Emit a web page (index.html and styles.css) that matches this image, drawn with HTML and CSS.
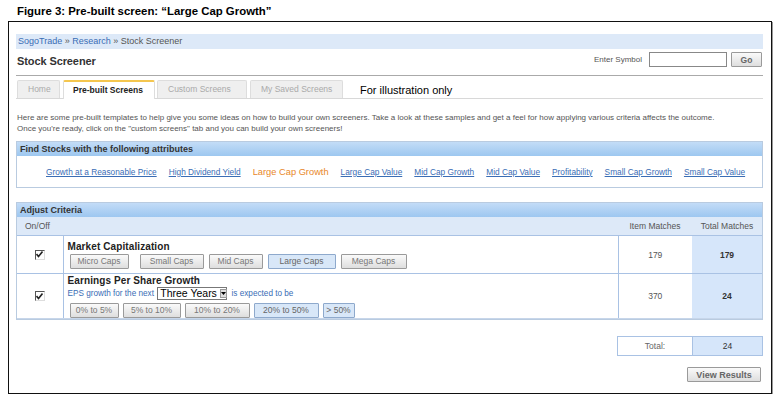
FILE: index.html
```html
<!DOCTYPE html>
<html lang="en">
<head>
    <meta charset="UTF-8">
    <title>Stock Screener</title>
    <link rel="stylesheet" href="styles.css">
</head>
<body>
    <div class="caption">Figure 3: Pre-built screen: “Large Cap Growth”</div>
    <div class="frame">
        <div class="crumbs"><a>SogoTrade</a> » <a>Research</a> » Stock Screener</div>
        <div class="header">
            <h1>Stock Screener</h1>
            <div class="symbol">
                <label>Enter Symbol</label>
                <input type="text">
                <button class="btn go">Go</button>
            </div>
        </div>
        <div class="tabs">
            <div class="tab">Home</div>
            <div class="tab active">Pre-built Screens</div>
            <div class="tab">Custom Screens</div>
            <div class="tab">My Saved Screens</div>
            <div class="note">For illustration only</div>
        </div>
        <p class="intro">Here are some pre-built templates to help give you some ideas on how to build your own screeners. Take a look at these samples and get a feel for how applying various criteria affects the outcome.<br>Once you're ready, click on the "custom screens" tab and you can build your own screeners!</p>

        <div class="box">
            <div class="box-title">Find Stocks with the following attributes</div>
            <div class="links">
                <a>Growth at a Reasonable Price</a>
                <a>High Dividend Yield</a>
                <a class="current">Large Cap Growth</a>
                <a>Large Cap Value</a>
                <a>Mid Cap Growth</a>
                <a>Mid Cap Value</a>
                <a>Profitability</a>
                <a>Small Cap Growth</a>
                <a>Small Cap Value</a>
            </div>
        </div>

        <div class="box criteria">
            <div class="box-title">Adjust Criteria</div>
            <table>
                <colgroup>
                    <col class="col-check">
                    <col>
                    <col class="col-item">
                    <col class="col-total">
                </colgroup>
                <tr class="sub">
                    <td class="s-check">On/Off</td>
                    <td></td>
                    <td class="s-item">Item Matches</td>
                    <td class="s-total">Total Matches</td>
                </tr>
                <tr class="row1">
                    <td class="c-check"><span class="check"><svg width="7" height="7" viewBox="0 0 7 7"><path d="M0.5 3 L2.5 5.5 L6.5 0.5" fill="none" stroke="#222" stroke-width="1.6"/></svg></span></td>
                    <td class="c-main">
                        <div class="crit-name">Market Capitalization</div>
                        <div class="opts">
                            <button class="btn opt w-micro">Micro Caps</button>
                            <button class="btn opt w-small">Small Caps</button>
                            <button class="btn opt w-mid">Mid Caps</button>
                            <button class="btn opt on w-large">Large Caps</button>
                            <button class="btn opt w-mega">Mega Caps</button>
                        </div>
                    </td>
                    <td class="c-item">179</td>
                    <td class="c-total"><b>179</b></td>
                </tr>
                <tr class="row2">
                    <td class="c-check"><span class="check"><svg width="7" height="7" viewBox="0 0 7 7"><path d="M0.5 3 L2.5 5.5 L6.5 0.5" fill="none" stroke="#222" stroke-width="1.6"/></svg></span></td>
                    <td class="c-main">
                        <div class="crit-name">Earnings Per Share Growth</div>
                        <div class="eps">EPS growth for the next <span class="select">Three Years <span class="arrow"><svg width="5" height="3" viewBox="0 0 5 3"><path d="M0 0 H5 L2.5 3 Z" fill="#000"/></svg></span></span> is expected to be</div>
                        <div class="opts">
                            <button class="btn opt w-a">0% to 5%</button>
                            <button class="btn opt w-b">5% to 10%</button>
                            <button class="btn opt w-c">10% to 20%</button>
                            <button class="btn opt on w-d">20% to 50%</button>
                            <button class="btn opt on w-e">&gt; 50%</button>
                        </div>
                    </td>
                    <td class="c-item">370</td>
                    <td class="c-total"><b>24</b></td>
                </tr>
            </table>
        </div>

        <div class="totals">
            <div class="t-label">Total:</div>
            <div class="t-value">24</div>
        </div>
        <div class="actions">
            <button class="btn results">View Results</button>
        </div>
    </div>
</body>
</html>
```

FILE: styles.css
```css
body {
    margin: 0;
    padding: 0;
    background: #fff;
    font-family: "Liberation Sans", Arial, sans-serif;
    color: #444;
}

.caption {
    padding: 5px 0 0 17px;
    height: 12px;
    font-size: 11.4px;
    font-weight: bold;
    color: #000;
    line-height: 12px;
}

.frame {
    margin: 4px 0 0 8px;
    width: 747px;
    height: 359px;
    padding: 12px 8px 0 7px;
    border: 1px solid #111;
    box-shadow: 1px 1px 0 #999;
}

.crumbs {
    height: 15px;
    line-height: 15px;
    padding-left: 2px;
    background: #dde9f8;
    font-size: 9px;
    color: #555;
}

.crumbs a {
    color: #3a6db5;
}

.header {
    display: flex;
    align-items: center;
    justify-content: space-between;
    height: 26px;
    border-bottom: 1px solid #aaa;
}

.header h1 {
    margin: 0 0 2px 1px;
    font-size: 11px;
    color: #333;
    letter-spacing: -0.1px;
}

.symbol {
    display: flex;
    align-items: center;
    margin-bottom: 5px;
}

.symbol label {
    font-size: 8px;
    color: #555;
    margin-right: 7px;
}

.symbol input {
    width: 76px;
    height: 13px;
    padding: 0;
    margin: 0 4px 0 0;
    border: 1px solid #888;
}

.btn {
    font-family: "Liberation Sans", Arial, sans-serif;
    font-size: 8.5px;
    color: #555;
    background: linear-gradient(#fafafa, #dedede);
    border: 1px solid #9a9a9a;
    border-radius: 1px;
    padding: 0;
    margin: 0;
    cursor: pointer;
}

.btn.go {
    width: 31px;
    height: 15px;
    margin-right: 1px;
    font-weight: bold;
    color: #666;
}

.tabs {
    display: flex;
    align-items: flex-end;
    height: 22px;
    padding-left: 1px;
    border-bottom: 1px solid #d8d8d8;
    white-space: nowrap;
}

.tab {
    flex-shrink: 0;
    height: 17px;
    line-height: 17px;
    padding: 0 10px;
    margin-right: 2px;
    background: #efefef;
    border: 1px solid #ddd;
    border-bottom: none;
    font-size: 8.5px;
    color: #aaa;
    border-radius: 2px 2px 0 0;
}

.tab:first-child {
    width: 21px;
    margin-right: 3px;
}

.tab.active {
    background: #fff;
    border-top: 2px solid #f4c64f;
    color: #222;
    font-weight: bold;
    margin-bottom: -1px;
    height: 17px;
    padding: 0 9px;
    width: 72px;
}

.tab:nth-child(3) {
    width: 68px;
    margin-right: 3px;
}

.tab:nth-child(4) {
    width: 71px;
    text-align: center;
}

.note {
    margin: 0 0 1px 15px;
    font-size: 11px;
    color: #000;
    line-height: 14px;
}

.intro {
    margin: 13px 0 0 1px;
    font-size: 8px;
    line-height: 11px;
    color: #555;
}

.box {
    margin-top: 7px;
    border: 1px solid #b9cbe0;
}

.box-title {
    height: 14px;
    line-height: 14px;
    padding-left: 3px;
    background: linear-gradient(#c3dcf7, #9dc7f0);
    font-size: 9px;
    font-weight: bold;
    color: #333;
}

.links {
    display: flex;
    align-items: center;
    gap: 12px;
    height: 31px;
    padding-left: 29px;
    white-space: nowrap;
}

.links a {
    flex-shrink: 0;
    font-size: 8.3px;
    color: #3a6db5;
    text-decoration: underline;
}

.links a.current {
    font-size: 9.3px;
    color: #e8872a;
    text-decoration: none;
}

.criteria {
    margin-top: 14px;
}

.criteria table {
    width: 100%;
    table-layout: fixed;
    border-collapse: collapse;
}

.col-check {
    width: 46px;
}

.col-item {
    width: 74px;
}

.col-total {
    width: 70px;
}

.criteria td {
    padding: 0;
    font-size: 8.5px;
    color: #555;
}

.sub td {
    height: 18px;
    background: #dde9f8;
    border-bottom: 1px solid #a9c2e4;
    text-align: center;
}

.sub .s-check {
    text-align: left;
    padding-left: 8px;
}

.c-check {
    text-align: center;
    border-right: 1px solid #a9c2e4;
}

.c-item {
    text-align: center;
    border-left: 1px solid #a9c2e4;
}

.c-total {
    text-align: center;
    background: #d6e6fa;
}

.row1 td {
    height: 37px;
    border-bottom: 1px solid #a9c2e4;
}

.row2 td {
    height: 44px;
    border-bottom: 1px solid #c7d6ea;
}

.c-total b {
    color: #333;
}

.check {
    display: inline-flex;
    align-items: center;
    justify-content: center;
    width: 8px;
    height: 8px;
    border: 1px solid #555;
    border-right-color: #ddd;
    border-bottom-color: #ddd;
    background: #fff;
    vertical-align: middle;
}

.criteria td.c-main {
    padding-left: 4px;
}

.crit-name {
    font-size: 10px;
    font-weight: bold;
    color: #222;
    letter-spacing: 0.1px;
    line-height: 12px;
}

.opts {
    display: flex;
    gap: 5px;
    margin-top: 1px;
    padding-left: 2px;
}

.btn.opt {
    height: 15px;
    font-size: 8.5px;
    color: #777;
}

.btn.opt.on {
    background: #d8e7f8;
    border-color: #8ea9cc;
    color: #666;
}

.w-micro { width: 59px; margin-right: 6px; }
.w-small { width: 64px; }
.w-mid { width: 54px; }
.w-large { width: 68px; }
.w-mega { width: 66px; }
.w-a { width: 49px; }
.w-b { width: 58px; }
.w-c { width: 65px; }
.w-d { width: 65px; }
.w-e { width: 32px; }

.row2 .opts {
    gap: 4px;
    margin-top: 3px;
}

.eps {
    display: flex;
    align-items: center;
    font-size: 8.2px;
    color: #3a6db5;
    line-height: 13px;
    white-space: pre;
}

.select {
    display: inline-flex;
    align-items: center;
    justify-content: space-between;
    width: 66px;
    height: 11px;
    padding-left: 2px;
    margin: 0 2px 0 1px;
    border: 1px solid #777;
    font-size: 10.5px;
    color: #000;
    background: #fff;
}

.arrow {
    display: inline-flex;
    align-items: center;
    justify-content: center;
    width: 9px;
    height: 9px;
    margin-right: 1px;
    background: #ddd;
    border: 1px solid #999;
    box-sizing: border-box;
}

.totals {
    display: flex;
    margin: 16px 0 0 auto;
    width: 144px;
    height: 18px;
    border: 1px solid #a9c2e4;
    font-size: 8.5px;
}

.t-label {
    width: 74px;
    line-height: 18px;
    text-align: center;
    color: #666;
    border-right: 1px solid #a9c2e4;
    background: #fff;
}

.t-value {
    flex: 1;
    line-height: 18px;
    text-align: center;
    background: #d6e6fa;
    color: #333;
}

.actions {
    display: flex;
    justify-content: flex-end;
    margin-top: 11px;
    padding-right: 2px;
}

.btn.results {
    width: 74px;
    height: 15px;
    font-size: 9px;
    font-weight: bold;
    color: #666;
}
```
